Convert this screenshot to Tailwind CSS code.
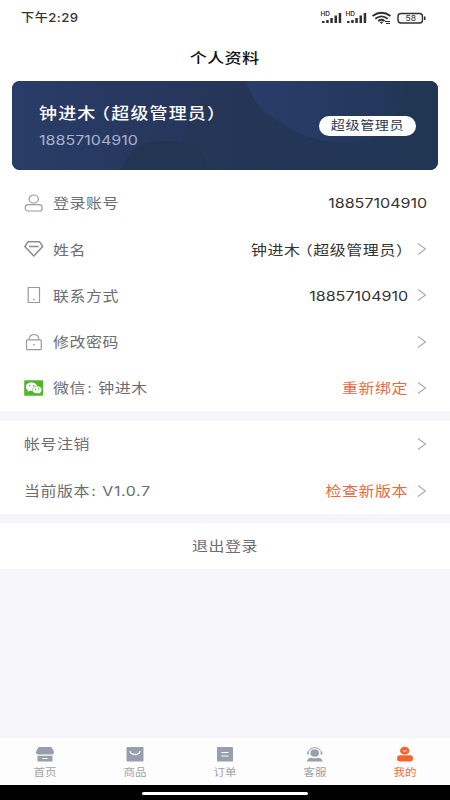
<!DOCTYPE html>
<html lang="zh-CN">
<head>
<meta charset="utf-8">
<meta name="viewport" content="width=device-width, initial-scale=1">
<title>个人资料</title>
<script src="https://cdn.jsdelivr.net/npm/@tailwindcss/browser@4"></script>
</head>
<body class="bg-[#f6f6fa]">
<div class="flex h-[800px] w-[450px] flex-col overflow-hidden bg-[#f6f6fa] font-['Inter','Noto_Sans_CJK_SC',sans-serif] text-[13.5px] leading-none whitespace-nowrap text-[#6b6d75]">
  <header class="flex h-9 shrink-0 items-center justify-between bg-white pr-[23px] pl-[21px] text-[#333]">
    <div class="origin-left scale-x-110 text-[12px] font-medium tracking-[0.4px]">下午2:29</div>
    <svg class="h-[16px] w-[107px]" viewBox="0 0 107 16" fill="#303030">
      <g id="signal"><text x="0.500" y="5.500" font-size="5.500" font-weight="600" textLength="9.500" lengthAdjust="spacingAndGlyphs">HD</text><path d="M2 11h2.500v2H2zM6.200 10h2.500v3H6.200zM10.300 8h2.500v5h-2.500zM14.500 5.500h2.500V13h-2.500zM18.700 3h2.500v10h-2.500z"/></g>
      <use href="#signal" x="25"/>
      <g fill="none" stroke="#303030" stroke-width="1.900"><path d="M52.500 6Q61.500-.500 70.500 6M55.300 8.700Q61.500 4 67.700 8.700M58.200 11Q61.500 8.500 64.600 11"/></g><path d="M59.500 11.700h4l-2 2.200zM65 11h5v1h-5zM66 13h4v1h-4z"/>
      <rect x="78" y="3.500" width="24.500" height="9.500" rx="3" fill="#f8f8f8" stroke="#303030" stroke-width="1.400"/><path d="M104 6.500h1.500V10H104z"/>
      <text x="85.500" y="11" font-size="8" textLength="10.500" lengthAdjust="spacingAndGlyphs">58</text>
    </svg>
  </header>
  <div class="flex h-[45px] shrink-0 items-center justify-center bg-white pb-[2px]"><h1 class="scale-x-122 text-[14px] font-medium tracking-[0.3px] text-[#111]">个人资料</h1></div>

  <div class="h-[99px] shrink-0 bg-white px-3">
    <section class="relative flex h-[89px] items-center justify-between overflow-hidden rounded-lg bg-[#233557] pr-[22px] pl-[27px]">
      <svg class="absolute inset-0 h-full w-full" viewBox="0 0 426 89" preserveAspectRatio="none">
        <defs>
          <linearGradient id="card"><stop stop-color="#283d68"/><stop offset=".4" stop-color="#27365c"/><stop offset="1" stop-color="#203652"/></linearGradient>
          <linearGradient id="glow"><stop stop-color="#2a3d6b"/><stop offset="1" stop-color="#213758"/></linearGradient>
        </defs>
        <path fill="url(#card)" d="M0 0h426v89H0z"/>
        <path fill="url(#glow)" d="M233 0Q244 30 275 45Q305 65 345 61Q385 57 395 0z"/>
        <path fill="#243553" d="M111 89Q115 60 153 60Q190 58 197 89z"/>
        <path fill="#243553" opacity=".5" d="M170 60Q180 15 235 0Q245 50 310 65L250 89h-54Q192 68 170 60z"/>
      </svg>
      <div class="relative flex flex-col gap-[12px] pt-[2px]">
        <h2 class="origin-left scale-x-116 text-[15.5px] font-medium tracking-[1px] text-white">钟进木<span class="ml-[4px] [font-feature-settings:'halt']">（</span>超级管理员<span class="[font-feature-settings:'halt']">）</span></h2>
        <div class="origin-left scale-x-119 text-[13.5px] text-[#a9b2ca]">18857104910</div>
      </div>
      <div class="relative flex h-[20px] w-[97px] items-center justify-center rounded-full bg-white pt-px text-[#293650]"><span class="scale-x-117 text-[12px] tracking-[0.6px]">超级管理员</span></div>
    </section>
  </div>

  <main class="grid h-[231px] shrink-0 grid-rows-5 bg-white pr-[23px] pl-6">
    <div class="flex items-center">
      <svg class="h-5 w-5" viewBox="0 0 20 20" fill="none" stroke="#999a9d" stroke-width="1.200"><ellipse cx="9.700" cy="6" rx="4.700" ry="4"/><rect x="1.200" y="11.700" width="17" height="6.300" rx="3.100"/></svg>
      <span class="ml-[9px] origin-left scale-x-118 pt-[2px] tracking-[0.5px]">登录账号</span>
      <span class="ml-auto origin-right scale-x-119 pt-[2px] text-[#333]">18857104910</span>
    </div>
    <div class="flex items-center">
      <svg class="h-5 w-5" viewBox="0 0 20 20" fill="none" stroke="#8b8c8f" stroke-width="1.500" stroke-linejoin="round"><path d="M4 2.800h11.600L18.700 7.500 9.800 17 .9 7.500zM5 7.500h9.700"/></svg>
      <span class="ml-[9px] origin-left scale-x-118 pt-[2px] tracking-[0.5px]">姓名</span>
      <span class="ml-auto origin-right scale-x-118 pt-[2px] tracking-[0.5px] text-[#333]">钟进木<span class="ml-[3.5px] [font-feature-settings:'halt']">（</span>超级管理员<span class="mr-[3px] [font-feature-settings:'halt']">）</span></span>
      <svg class="ml-[9px] h-[14px] w-[10px]" viewBox="0 0 10 14" fill="none" stroke="#aaa" stroke-width="1.100"><path d="M1 1.500 8.500 7 1 12.500"/></svg>
    </div>
    <div class="flex items-center">
      <svg class="h-5 w-5" viewBox="0 0 20 20" fill="none" stroke="#999a9d" stroke-width="1.200"><path d="M4.200 2.500h11.300v15H4.200z"/><path d="M9.100 14.500h1.500" stroke-width="1.500"/></svg>
      <span class="ml-[9px] origin-left scale-x-118 pt-[2px] tracking-[0.5px]">联系方式</span>
      <span class="ml-auto origin-right scale-x-119 pt-[2px] text-[#333]">18857104910</span>
      <svg class="ml-[9px] h-[14px] w-[10px]" viewBox="0 0 10 14" fill="none" stroke="#aaa" stroke-width="1.100"><path d="M1 1.500 8.500 7 1 12.500"/></svg>
    </div>
    <div class="flex items-center">
      <svg class="h-5 w-5" viewBox="0 0 20 20" fill="none" stroke="#999a9d" stroke-width="1.200"><rect x="2.500" y="7.800" width="14.800" height="9.800" rx="1"/><path d="M5.200 7.500V6.500Q6 2.500 10 2.500T14.800 6.500V7.500M9.300 12.700h1.500"/></svg>
      <span class="ml-[9px] origin-left scale-x-118 pt-[2px] tracking-[0.5px]">修改密码</span>
      <svg class="ml-auto h-[14px] w-[10px]" viewBox="0 0 10 14" fill="none" stroke="#aaa" stroke-width="1.100"><path d="M1 1.500 8.500 7 1 12.500"/></svg>
    </div>
    <div class="flex items-center">
      <svg class="h-4 w-5" viewBox="0 0 20 16"><rect x=".2" y=".3" width="19" height="15.400" rx="1" fill="#52b52b"/><path fill="#fff" d="M7.500 2.700C4.200 2.700 2 4.500 2 6.900c0 1.400.7 2.500 2 3.300l-.4 1.700 2-1.100c.7.200 1.300.2 2 .2z"/><ellipse cx="7.600" cy="6.800" rx="5.600" ry="4.200" fill="#fff"/><ellipse cx="13" cy="9.800" rx="4.900" ry="3.800" fill="#fff" stroke="#52b52b" stroke-width=".6"/><path fill="#fff" d="m14.500 12.800 1.800 1-.4-2z"/><g fill="#52b52b"><circle cx="5.700" cy="5.700" r=".8"/><circle cx="9.600" cy="5.700" r=".8"/><circle cx="11.400" cy="9" r=".65"/><circle cx="14.700" cy="9" r=".65"/></g></svg>
      <span class="ml-[9px] origin-left scale-x-118 pt-[2px] tracking-[0.5px]">微信<span class="mr-[5px] ml-px">:</span>钟进木</span>
      <span class="ml-auto origin-right scale-x-118 pt-[2px] tracking-[0.5px] text-[#ed6841]">重新绑定</span>
      <svg class="ml-[9px] h-[14px] w-[10px]" viewBox="0 0 10 14" fill="none" stroke="#aaa" stroke-width="1.100"><path d="M1 1.500 8.500 7 1 12.500"/></svg>
    </div>
  </main>

  <section class="mt-[10px] grid h-[93px] shrink-0 grid-rows-2 bg-white pr-[23px] pl-6">
    <div class="flex items-center justify-between">
      <span class="origin-left scale-x-118 pt-px tracking-[0.5px]">帐号注销</span>
      <svg class="h-[14px] w-[10px]" viewBox="0 0 10 14" fill="none" stroke="#aaa" stroke-width="1.100"><path d="M1 1.500 8.500 7 1 12.500"/></svg>
    </div>
    <div class="flex items-center">
      <span class="origin-left scale-x-118 pt-[2px] tracking-[0.5px]">当前版本<span class="mr-[5px] ml-px">:</span>V1.0.7</span>
      <span class="ml-auto origin-right scale-x-118 pt-[2px] tracking-[0.5px] text-[#ed6841]">检查新版本</span>
      <svg class="ml-[9px] h-[14px] w-[10px]" viewBox="0 0 10 14" fill="none" stroke="#aaa" stroke-width="1.100"><path d="M1 1.500 8.500 7 1 12.500"/></svg>
    </div>
  </section>

  <button class="mt-[9px] flex h-[46px] shrink-0 items-center justify-center bg-white pt-[2px]"><span class="scale-x-118 tracking-[0.5px]">退出登录</span></button>

  <nav class="mt-auto grid h-[47px] shrink-0 grid-cols-5 bg-[#fdfdfd] pt-[7px] text-[10px] text-[#a0a2aa]">
    <div class="flex flex-col items-center gap-[4px]">
      <svg class="h-[18px] w-5" viewBox="0 0 20 18"><path fill="#989eac" d="M3.500 2h13l2.700 5.200q-.4 2.100-2 2.200H2.800Q1.200 9.200.8 7.200zM2.500 10.800h15v5.700h-15z"/><path d="M7.500 13.500h5" stroke="#fff"/></svg>
      <span class="scale-x-115">首页</span>
    </div>
    <div class="flex flex-col items-center gap-[4px]">
      <svg class="h-[18px] w-5" viewBox="0 0 20 18"><rect x="1.500" y="2" width="17" height="14.500" rx=".7" fill="#989eac"/><path d="M5 6Q5.500 9.500 10 9.500T15 6" fill="none" stroke="#fff" stroke-width="1.300"/></svg>
      <span class="scale-x-115">商品</span>
    </div>
    <div class="flex flex-col items-center gap-[4px]">
      <svg class="h-[18px] w-5" viewBox="0 0 20 18"><rect x="2" y="2" width="16" height="14.500" rx=".7" fill="#989eac"/><path d="M6.500 7.500h7M6.500 11h7" stroke="#fff" stroke-width="1.200"/></svg>
      <span class="scale-x-115">订单</span>
    </div>
    <div class="flex flex-col items-center gap-[4px]">
      <svg class="h-[18px] w-5" viewBox="0 0 20 18" fill="#989eac"><ellipse cx="9.700" cy="8" rx="4.300" ry="3.800"/><path d="M2 16.500v-.5Q2.500 13 6.300 12.700q3.400 1 6.800 0 3.800.3 4.400 3.300v.5zM2.200 6.500h1.600v3H2.200zM15.700 6.500h1.600v3h-1.600z"/><path d="M3.500 6.500Q5 2.500 9.700 2.500T16 6.500" fill="none" stroke="#989eac"/></svg>
      <span class="scale-x-115">客服</span>
    </div>
    <div class="flex flex-col items-center gap-[4px] text-[#f16c40]">
      <svg class="h-[18px] w-5" viewBox="0 0 20 18" fill="#fa622d"><ellipse cx="9.700" cy="5.700" rx="4.700" ry="3.900"/><rect x="2" y="10.200" width="16" height="6.300" rx="3"/><path d="M7.800 5.500Q9.700 7.200 11.600 5.500" fill="none" stroke="#fff"/></svg>
      <span class="scale-x-115">我的</span>
    </div>
  </nav>
  <footer class="flex h-[15px] shrink-0 items-center justify-center bg-black pt-[1px]"><div class="h-[3px] w-[166px] rounded-full bg-white"></div></footer>
</div>
</body>
</html>
